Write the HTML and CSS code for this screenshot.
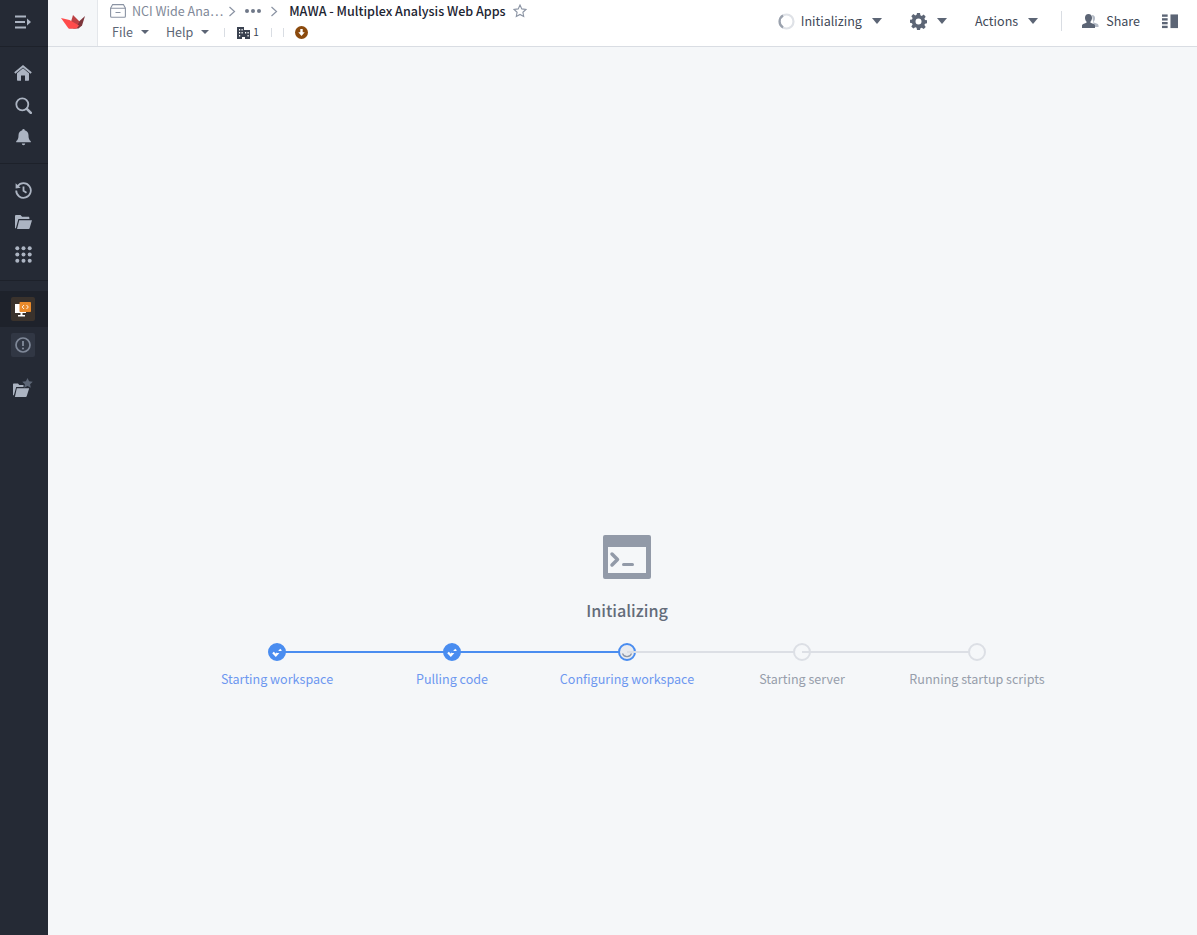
FILE: index.html
```html
<!DOCTYPE html>
<html lang="en">
<head>
<meta charset="UTF-8" />
<title>MAWA - Multiplex Analysis Web Apps</title>
<link rel="stylesheet" href="styles.css">
</head>
<body>
<div class="app">
  <nav class="sidebar">
    <div class="side-top">
      <svg width="18" height="14" viewBox="0 0 18 14"><path d="M1 1.500h11M1 7h10M1 12.500h11" class="bar"/><path d="M13 3.500l4 3.500-4 3.500z" class="fill"/></svg>
    </div>
    <div class="side-group">
      <div class="side-item"><svg width="18" height="16" viewBox="0 0 18 16"><path class="fill" d="M9 3.200l6 5V15a.7.7 0 0 1-.7.7H11V10.500H7v5.200H3.700A.7.7 0 0 1 3 15V8.200z"/><path class="line" d="M.8 8L9 1.200 17.200 8"/></svg></div>
      <div class="side-item"><svg width="17" height="17" viewBox="0 0 17 17"><circle class="line" cx="7.300" cy="7.300" r="6"/><path class="line thick" d="M11.800 11.800l4 4"/></svg></div>
      <div class="side-item"><svg width="15" height="17" viewBox="0 0 15 17"><path class="fill" d="M7.500 0a1.200 1.200 0 0 1 1.200 1.300C11 1.900 12.500 3.800 12.500 6.300c0 4 1.200 4.900 2.300 6v.9H.2v-.9c1.100-1.100 2.300-2 2.300-6 0-2.500 1.500-4.400 3.800-5A1.200 1.200 0 0 1 7.500 0z"/><path class="fill" d="M5.800 14.500h3.400a1.700 1.700 0 0 1-3.400 0z"/></svg></div>
    </div>
    <div class="side-group second">
      <div class="side-item"><svg width="17" height="17" viewBox="0 0 17 17"><path class="line" d="M2.600 4.200A7.300 7.300 0 1 1 1.200 8.500"/><path class="fill" d="M.6 1.200l5 4.600-5 .6z"/><path class="line" d="M8.500 4.500v4.300l3 2"/></svg></div>
      <div class="side-item"><svg width="17" height="14" viewBox="0 0 17 14"><path class="fill" d="M0 1.200C0 .5.500 0 1.200 0h4.300l1.600 1.800h6.200c.6 0 1.100.5 1.100 1.200v1.100H3.400L.8 13.400 0 13z"/><path class="fill" d="M4.200 5.300H17l-2.300 7.800c-.1.500-.5.900-1 .9H2z"/></svg></div>
      <div class="side-item"><svg width="17" height="17" viewBox="0 0 17 17"><g class="fill"><circle cx="2.300" cy="2.300" r="2"/><circle cx="8.500" cy="2.300" r="2"/><circle cx="14.700" cy="2.300" r="2"/><circle cx="2.300" cy="8.500" r="2"/><circle cx="8.500" cy="8.500" r="2"/><circle cx="14.700" cy="8.500" r="2"/><circle cx="2.300" cy="14.700" r="2"/><circle cx="8.500" cy="14.700" r="2"/><circle cx="14.700" cy="14.700" r="2"/></g></svg></div>
    </div>
    <div class="side-apps">
      <div class="app-row active">
        <div class="app-box orange">
          <svg width="16" height="15" viewBox="0 0 16 15"><path fill="#fff" d="M0 2h11v9H7.500v2H10v1.500H3V13h2.500v-2H0z"/><rect x="4.500" y="0" width="11.500" height="10" rx=".8" fill="#e98a2b"/><path d="M9 3L7.200 5 9 7M11.500 3l1.800 2-1.800 2" fill="none" stroke="#fff" stroke-width=".9"/></svg>
        </div>
      </div>
      <div class="app-row">
        <div class="app-box">
          <svg width="16" height="16" viewBox="0 0 16 16"><circle cx="8" cy="8" r="7" fill="none" stroke="#7f8898" stroke-width="1.700"/><path d="M8 4v5" stroke="#7f8898" stroke-width="1.900"/><circle cx="8" cy="11.500" r="1.100" fill="#7f8898"/></svg>
        </div>
      </div>
      <div class="app-row star">
        <svg width="20" height="20" viewBox="0 0 20 20"><path class="fill" d="M0 6.600c0-.6.400-1 1-1h4l1.300 1.500h4.200v2H3.200L.8 17.500 0 17z"/><path class="fill" d="M3.800 10.300h12.400L13.700 18.200c-.1.500-.5.800-1 .8H1.900z"/><path fill="#5d6676" d="M14.500 0l1.600 3.300 3.700.4-2.700 2.500.7 3.600-3.300-1.800-3.300 1.800.7-3.600-2.700-2.500 3.700-.4z"/></svg>
      </div>
    </div>
  </nav>

  <div class="content">
    <header class="topbar">
      <div class="logo-cell">
        <svg width="24" height="14" viewBox="0 0 24 14"><path fill="#7d353b" d="M24 1l-3 9.500-3.500 3H12l6-7z"/><path fill="#bd4043" d="M12 0l6.500 6.500-4 7H8z"/><path fill="#ff4b4b" d="M0 3l8.500 2 9.500 5.500-2.500 3H7.500z"/></svg>
      </div>
      <div class="title-block">
        <div class="crumbs">
          <svg class="box-icon" width="16" height="14" viewBox="0 0 16 14"><path fill="none" stroke="#8a93a3" stroke-width="1.100" d="M.6 4.200L2.600.6h10.800l2 3.600v8.100a1 1 0 0 1-1 1H1.600a1 1 0 0 1-1-1z"/><path fill="none" stroke="#8a93a3" stroke-width="1.100" d="M.6 4.200h14.800M5.500 8.500h5"/></svg>
          <span class="crumb">NCI Wide Ana…</span>
          <svg class="chev" width="8" height="11" viewBox="0 0 8 11"><path d="M1.500 1l5 4.500-5 4.500"/></svg>
          <span class="dots"><i></i><i></i><i></i></span>
          <svg class="chev" width="8" height="11" viewBox="0 0 8 11"><path d="M1.500 1l5 4.500-5 4.500"/></svg>
          <span class="title">MAWA - Multiplex Analysis Web Apps</span>
          <svg class="star-icon" width="14" height="14" viewBox="0 0 14 14"><path d="M7 1l1.800 3.900 4.200.5-3.100 2.900.8 4.200L7 10.400l-3.700 2.100.8-4.200L1 5.400l4.200-.5z"/></svg>
        </div>
        <div class="menus">
          <span class="menu">File</span><span class="caret small"></span>
          <span class="menu help">Help</span><span class="caret small"></span>
          <span class="tick first"></span>
          <svg class="building" width="13" height="13" viewBox="0 0 13 13"><path fill="#3a4250" fill-rule="evenodd" d="M0 1h7v3h6v9H8v-2H5v2H0zM2 3v1.500h1.200V3zm2.500 0v1.500h1.200V3zM2 6v1.500h1.200V6zm2.500 0v1.500h1.200V6zm3.500 0v1.500h1.200V6zm2.500 0v1.500h1.200V6zM2 9v1.500h1.200V9zm8.500 0v1.500h1.200V9z"/></svg>
          <span class="count">1</span>
          <span class="tick"></span>
          <span class="tick close"></span>
          <svg class="dl" width="13" height="13" viewBox="0 0 13 13"><circle cx="6.500" cy="6.500" r="6.500" fill="#8b4a0d"/><path fill="#fff" d="M5.300 3h2.400v3.200h2L6.500 10 3.300 6.200h2z"/></svg>
        </div>
      </div>
      <div class="actions">
        <svg class="spin" width="17" height="17" viewBox="0 0 17 17"><circle cx="8.500" cy="8.500" r="7" fill="none" stroke="#dfe2e7" stroke-width="2.200"/><path d="M5 2.500a7 7 0 0 0 0 12" fill="none" stroke="#9aa1ad" stroke-width="2.200"/></svg>
        <span class="act status">Initializing</span><span class="caret"></span>
        <svg class="gear" width="17" height="17" viewBox="0 0 17 17"><path fill="#5c6575" fill-rule="evenodd" d="M7 0h3l.4 2.300 1.300.6 2-1.300 2 2.100-1.300 1.900.6 1.300 2 .4v3l-2 .4-.6 1.300 1.300 1.900-2 2.100-2-1.300-1.300.6L10 17H7l-.4-2.200-1.300-.6-2 1.300-2-2.100 1.300-1.900-.6-1.300-2-.4v-3l2-.4.6-1.300-1.300-1.900 2-2.100 2 1.300 1.300-.6zm1.500 5.500a3 3 0 1 0 0 6 3 3 0 0 0 0-6z"/></svg>
        <span class="caret"></span>
        <span class="act action-label">Actions</span><span class="caret"></span>
        <span class="divider"></span>
        <svg class="people" width="17" height="14" viewBox="0 0 17 14"><path fill="#b3bac5" d="M10 1a3 3 0 0 1 3 3.400c0 1.300-.6 2.500-1.300 3.100v1.100c1.800.5 4.300 1.100 4.800 2.400v2h-4.500z"/><path fill="#5c6575" d="M6.500 0C8.700 0 10 1.700 10 3.900c0 1.500-.7 2.900-1.500 3.600v1.300c1.700.5 3.800 1.200 4.500 2.400V14H0v-2.800C.7 10 2.800 9.300 4.500 8.800V7.500C3.700 6.800 3 5.400 3 3.900 3 1.700 4.300 0 6.500 0z"/></svg>
        <span class="act share">Share</span>
        <svg class="panel" width="16" height="15" viewBox="0 0 17 15"><g fill="#5c6575"><rect x="0" y="0" width="6" height="2.500"/><rect x="0" y="4" width="6" height="2.500"/><rect x="0" y="8" width="6" height="2.500"/><rect x="0" y="12" width="6" height="2.500"/><rect x="9" y="0" width="8" height="14.500"/></g></svg>
      </div>
    </header>

    <main class="stage">
      <svg class="term" width="48" height="44" viewBox="0 0 48 44"><path fill="#929aa8" fill-rule="evenodd" d="M2 0h44a2 2 0 0 1 2 2v40a2 2 0 0 1-2 2H2a2 2 0 0 1-2-2V2a2 2 0 0 1 2-2zm3 12v26h38V12z"/><path fill="none" stroke="#929aa8" stroke-width="3.500" stroke-linecap="round" stroke-linejoin="round" d="M9 19l5.500 5.500L9 30"/><path stroke="#929aa8" stroke-width="3" stroke-linecap="round" d="M20.500 29.500h9"/></svg>
      <h2 class="stage-title">Initializing</h2>
      <ol class="steps">
        <li class="step done">
          <span class="dot"><svg width="10" height="9" viewBox="0 0 10 9"><path d="M1 4.500l2.800 2.800L9 1.500" fill="none" stroke="#fff" stroke-width="2.200"/></svg></span>
          <span class="label">Starting workspace</span>
        </li>
        <li class="step done">
          <span class="dot"><svg width="10" height="9" viewBox="0 0 10 9"><path d="M1 4.500l2.800 2.800L9 1.500" fill="none" stroke="#fff" stroke-width="2.200"/></svg></span>
          <span class="label">Pulling code</span>
        </li>
        <li class="step current">
          <span class="dot"><svg width="12" height="12" viewBox="0 0 12 12"><path d="M1.500 7.500a4.800 4.800 0 0 0 9 0" fill="none" stroke="#8d97a8" stroke-width="1.200"/></svg></span>
          <span class="label">Configuring workspace</span>
        </li>
        <li class="step">
          <span class="dot"></span>
          <span class="label">Starting server</span>
        </li>
        <li class="step">
          <span class="dot"></span>
          <span class="label">Running startup scripts</span>
        </li>
      </ol>
    </main>
  </div>
</div>
</body>
</html>
```

FILE: styles.css
```css
* { box-sizing: border-box; }
html, body {
  margin: 0;
  height: 100%;
}
body {
  font-family: "Noto Sans CJK SC", "Noto Sans", sans-serif;
  font-size: 12.55px;
  line-height: 20px;
  color: #5c6575;
  background: #f5f7f9;
  overflow: hidden;
}
svg { display: block; flex: none; }
.app {
  display: flex;
  height: 935px;
}

/* left rail */
.sidebar {
  width: 48px;
  flex: none;
  background: #252a35;
}
.sidebar .fill { fill: #acb4c2; }
.sidebar .line {
  fill: none;
  stroke: #acb4c2;
  stroke-width: 1.800;
}
.sidebar .thick { stroke-width: 2.600; stroke-linecap: round; }
.sidebar .bar {
  fill: none;
  stroke: #acb4c2;
  stroke-width: 2;
}
.side-top {
  height: 47px;
  border-bottom: 1px solid #1d212a;
  display: flex;
  align-items: center;
  justify-content: center;
  padding: 0 2px 3px 0;
}
.side-group {
  height: 117px;
  padding-top: 10px;
  border-bottom: 1px solid #1d212a;
}
.side-item {
  height: 32px;
  display: flex;
  align-items: center;
  justify-content: center;
  padding-right: 2px;
}
.side-apps { padding-top: 10px; }
.app-row {
  height: 36px;
  display: flex;
  align-items: center;
  justify-content: center;
  padding-right: 2px;
}
.app-row.active { background: #1e222b; }
.app-row.star { height: 50px; }
.app-box {
  width: 24px;
  height: 24px;
  border-radius: 2px;
  background: #313744;
  display: flex;
  align-items: center;
  justify-content: center;
}
.app-box.orange { background: #3a322c; }

/* main column */
.content {
  flex: 1;
  min-width: 0;
  display: flex;
  flex-direction: column;
}
.topbar {
  height: 47px;
  flex: none;
  display: flex;
  background: #fff;
  border-bottom: 1px solid #d9dde3;
}
.logo-cell {
  width: 50px;
  flex: none;
  background: #f5f7f9;
  border-right: 1px solid #e4e7eb;
  display: flex;
  align-items: center;
  justify-content: center;
  padding-bottom: 3px;
}
.title-block {
  flex: 1;
  padding: 1px 0 0 12px;
}
.crumbs {
  height: 20px;
  display: flex;
  align-items: center;
}
.crumb {
  margin-left: 6px;
  color: #808898;
  white-space: nowrap;
}
.chev {
  margin-left: 5px;
  fill: none;
  stroke: #8a93a3;
  stroke-width: 1.200;
}
.dots {
  display: flex;
  gap: 2px;
  margin: 0 9px 0 9px;
}
.dots i {
  width: 4px;
  height: 4px;
  border-radius: 50%;
  background: #6f7888;
}
.dots + .chev { margin-left: 0; }
.title {
  margin-left: 11px;
  font-weight: 500;
  color: #1c2431;
  white-space: nowrap;
}
.star-icon {
  margin-left: 7px;
  fill: none;
  stroke: #8a93a3;
  stroke-width: 1.100;
}
.menus {
  height: 20px;
  margin-top: 1px;
  padding-left: 2px;
  display: flex;
  align-items: center;
}
.menu { color: #5c6575; }
.menu.help { margin-left: 17px; }
.caret {
  width: 0;
  height: 0;
  flex: none;
  border-left: 5px solid transparent;
  border-right: 5px solid transparent;
  border-top: 6px solid #5c6575;
  margin-left: 10px;
}
.caret.small {
  border-left-width: 4px;
  border-right-width: 4px;
  border-top-width: 4px;
  margin-left: 8px;
}
.tick {
  width: 1px;
  height: 9px;
  background: #d9dde3;
  margin-left: 12px;
}
.tick.first { margin-left: 15px; }
.tick.close { margin-left: 11px; }
.building { margin-left: 12px; }
.count {
  margin-left: 3px;
  font-size: 10px;
  color: #3a4250;
}
.dl { margin-left: 11px; }

/* right side of the header */
.actions {
  display: flex;
  align-items: center;
  padding: 0 19px 4px 0;
}
.act { color: #414958; white-space: nowrap; }
.status { margin-left: 6px; }
.gear { margin-left: 28px; }
.action-label { margin-left: 28px; }
.divider {
  width: 1px;
  height: 20px;
  background: #d9dde3;
  margin-left: 23px;
}
.people { margin-left: 20px; }
.share { margin-left: 7px; }
.panel { margin-left: 22px; }

/* initializing state */
.stage {
  flex: 1;
  padding: 488px 0 0 9px;
  display: flex;
  flex-direction: column;
  align-items: center;
}
.stage-title {
  margin: 19px 0 0;
  font-size: 16.2px;
  line-height: 24px;
  font-weight: 500;
  color: #646c7a;
}
.steps {
  list-style: none;
  margin: 21px 0 0;
  padding: 0;
  display: grid;
  grid-template-columns: repeat(5, 175px);
}
.step {
  position: relative;
  display: flex;
  flex-direction: column;
  align-items: center;
  color: #979eab;
}
.step + .step::before {
  content: "";
  position: absolute;
  top: 8px;
  right: 50%;
  width: 100%;
  height: 2px;
  background: #dcdfe5;
}
.step.done + .step::before { background: #4a8df0; }
.dot {
  position: relative;
  width: 18px;
  height: 18px;
  border-radius: 50%;
  border: 2px solid #dcdfe5;
  background: #f5f7f9;
  display: flex;
  align-items: center;
  justify-content: center;
}
.done .dot {
  background: #4a8df0;
  border-color: #4a8df0;
}
.current .dot {
  border-color: #4a8df0;
  background: #e9ebef;
}
.label {
  margin-top: 8px;
  white-space: nowrap;
}
.done .label, .current .label { color: #6d97f0; }
```
